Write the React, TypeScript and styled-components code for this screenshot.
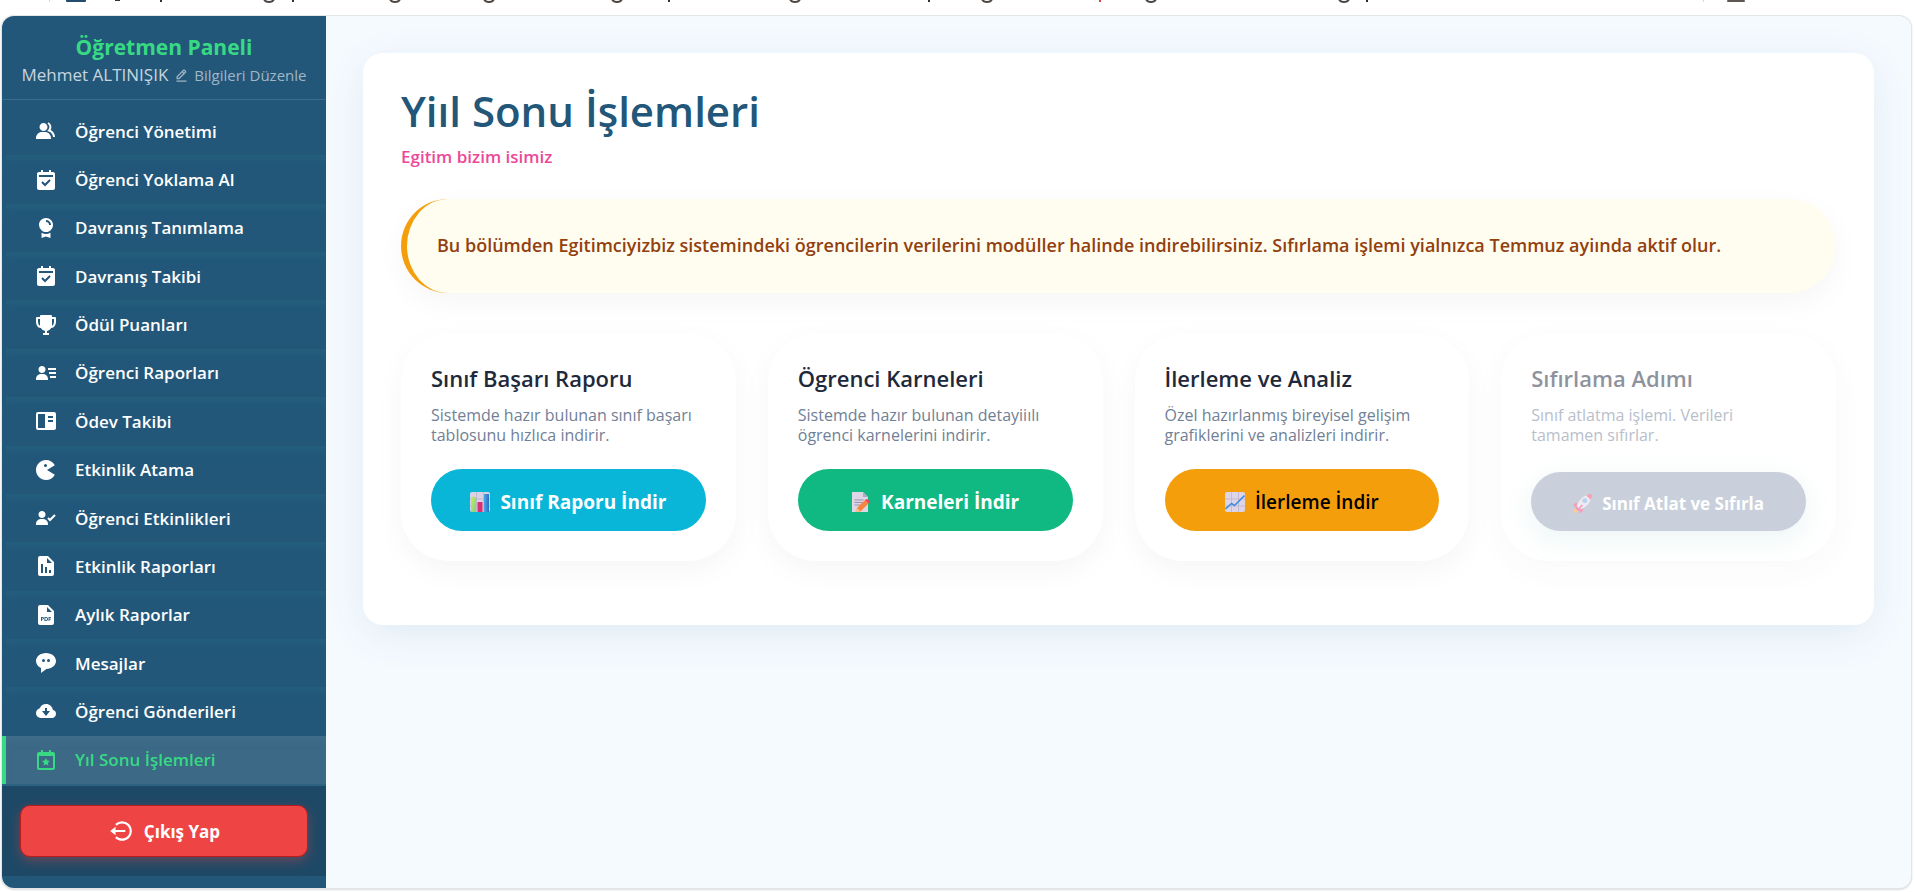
import React from "react";
import styled, { createGlobalStyle, css } from "styled-components";
import {
  BiCalendarStar,
  BiEditAlt,
  BiLogOutCircle,
  BiSolidAward,
  BiSolidBookContent,
  BiSolidCalendarCheck,
  BiSolidCloudDownload,
  BiSolidFilePdf,
  BiSolidGame,
  BiSolidGroup,
  BiSolidMessageRoundedDots,
  BiSolidReport,
  BiSolidTrophy,
  BiSolidUserCheck,
  BiSolidUserDetail,
} from "react-icons/bi";

const GlobalStyle = createGlobalStyle`
  *, *::before, *::after { box-sizing: border-box; }
  body {
    margin: 0;
    background: #ffffff;
    font-family: "Open Sans", sans-serif;
    color: #1e293b;
  }
  button, a { font-family: inherit; }
`;

const Page = styled.div`
  display: flex;
  flex-direction: column;
  min-height: 100vh;
  padding: 0 4px 4px 2px;
`;

const Bookmarks = styled.div`
  height: 16px;
  overflow: hidden;

  svg {
    display: block;
  }
`;

const Frame = styled.div`
  flex: 1;
  display: flex;
  border-radius: 12px;
  overflow: hidden;
  background: #f5faff;
  box-shadow: 0 0 0 1px #e3e6e8, 0 1px 2px 1px #d9dcde;
`;

const Sidebar = styled.aside`
  flex: 0 0 324px;
  display: flex;
  flex-direction: column;
  background: #22577a;
  color: #ffffff;
`;

const SidebarHeader = styled.header`
  height: 84px;
  padding: 15px 0 0;
  border-bottom: 1px solid #3b6a8c;
  text-align: center;
`;

const PanelTitle = styled.h2`
  margin: 0;
  font-size: 21px;
  line-height: 32px;
  font-weight: 700;
  color: #38d983;
`;

const UserLine = styled.div`
  display: flex;
  justify-content: center;
  align-items: center;
  gap: 6px;
  font-size: 17px;
  line-height: 24px;
  color: #c8d5de;
`;

const EditLink = styled.a`
  display: flex;
  align-items: center;
  gap: 5px;
  font-size: 15px;
  color: #a0b6c5;
  text-decoration: none;
`;

const Menu = styled.ul`
  flex: 1;
  display: flex;
  flex-direction: column;
  margin: 0;
  padding: 7px 0 0;
  list-style: none;
`;

const MenuLink = styled.a<{ $active?: boolean }>`
  flex: 1;
  display: flex;
  align-items: center;
  gap: 17px;
  min-height: 44px;
  padding-left: 28px;
  border-left: 4px solid transparent;
  font-size: 17px;
  font-weight: 600;
  color: #ffffff;
  text-decoration: none;

  svg {
    width: 24px;
    height: 24px;
  }

  ${({ $active }) =>
    $active &&
    css`
      border-left-color: #38d983;
      background: #3b6986;
      color: #38d983;
    `}
`;

const MenuItem = styled.li`
  flex: 1;
  display: flex;

  & + & ${MenuLink} {
    box-shadow: inset 0 10px 12px -8px #26647f;
  }

  & + &:last-child ${MenuLink} {
    box-shadow: inset 0 8px 12px -8px #457490;
  }
`;

const SidebarFooter = styled.footer`
  margin-bottom: 12px;
  padding: 19px 18px;
  border-top: 2px solid #2c6380;
  background: #1e4966;
`;

const LogoutButton = styled.button`
  display: flex;
  justify-content: center;
  align-items: center;
  gap: 10px;
  width: 100%;
  height: 52px;
  border: 1px solid #b91c1c;
  border-radius: 10px;
  background: #ef4444;
  box-shadow: 0 4px 12px rgba(239, 68, 68, 0.35);
  font-size: 17px;
  font-weight: 700;
  color: #ffffff;
`;

const Main = styled.main`
  flex: 1;
  min-width: 0;
  padding: 37px;
`;

const Panel = styled.section`
  padding: 34px 38px 64px;
  border-radius: 20px;
  background: #ffffff;
  box-shadow: 0 10px 40px rgba(34, 87, 122, 0.09);
`;

const PageTitle = styled.h1`
  margin: 0;
  font-size: 42px;
  line-height: 48px;
  font-weight: 600;
  color: #22577a;
`;

const Slogan = styled.p`
  margin: 10px 0 30px;
  font-size: 17px;
  line-height: 24px;
  font-weight: 600;
  color: #ec4899;
`;

const Notice = styled.div`
  display: flex;
  align-items: center;
  min-height: 94px;
  margin-bottom: 40px;
  padding: 16px 32px 18px 30px;
  border-left: 6px solid #f59e0b;
  border-radius: 48px;
  background: #fffdf0;
  box-shadow: 0 10px 30px rgba(0, 0, 0, 0.04);
  font-size: 18px;
  line-height: 28px;
  font-weight: 600;
  color: #92400e;
`;

const CardGrid = styled.div`
  display: grid;
  grid-template-columns: repeat(auto-fit, minmax(280px, 1fr));
  gap: 32px;
`;

const Card = styled.article<{ $disabled?: boolean }>`
  display: flex;
  flex-direction: column;
  min-height: 228px;
  padding: 30px;
  border-radius: 48px;
  background: #ffffff;
  box-shadow: 0 10px 30px rgba(0, 0, 0, 0.04);
  opacity: ${({ $disabled }) => ($disabled ? 0.5 : 1)};
`;

const CardTitle = styled.h3`
  margin: 0 0 12px;
  font-size: 22px;
  line-height: 30px;
  font-weight: 600;
`;

const CardText = styled.p`
  margin: 0 0 22px;
  font-size: 16px;
  line-height: 20px;
  color: #718096;
`;

type Tone = "cyan" | "green" | "amber" | "muted";

const tones = {
  cyan: css`
    background: #09b6d8;
    color: #ffffff;
  `,
  green: css`
    background: #10b981;
    color: #ffffff;
  `,
  amber: css`
    background: #f59e0b;
    color: #000000;
    font-weight: 600;
  `,
  muted: css`
    height: 59px;
    background: #94a3b8;
    color: #ffffff;
    font-size: 17px;
    box-shadow: 0 8px 25px rgba(56, 163, 165, 0.18);
  `,
};

const CardButton = styled.button<{ $tone: Tone }>`
  display: flex;
  justify-content: center;
  align-items: center;
  gap: 10px;
  width: 100%;
  height: 62px;
  margin-top: auto;
  padding: 3px 16px 0;
  border: 0;
  border-radius: 31px;
  font-size: 19px;
  font-weight: 700;
  ${({ $tone }) => tones[$tone]}
`;

const BarChartIcon = () => (
  <svg width="20" height="20" viewBox="0 0 20 20" aria-hidden="true">
    <defs>
      <linearGradient id="barGreen" x1="0" y1="0" x2="1" y2="1">
        <stop offset="0" stopColor="#c3ef5a" />
        <stop offset="1" stopColor="#7fcf86" />
      </linearGradient>
      <linearGradient id="barBlue" x1="0" y1="0" x2="1" y2="0">
        <stop offset="0" stopColor="#4aa8ea" />
        <stop offset="1" stopColor="#2a6fc4" />
      </linearGradient>
    </defs>
    <rect width="20" height="20" rx="2" fill="#d9d2e4" />
    <path d="M0 7h20M0 14h20M6.500 0v20M13.500 0v20" stroke="#b9aec9" strokeWidth="0.700" />
    <rect x="1" y="5" width="5" height="15" rx="0.500" fill="url(#barGreen)" />
    <rect x="7.500" y="10" width="5" height="10" rx="0.500" fill="#dc2f6f" />
    <rect x="14" y="2" width="5" height="18" rx="0.500" fill="url(#barBlue)" />
  </svg>
);

const MemoIcon = () => (
  <svg width="20" height="20" viewBox="0 0 20 20" aria-hidden="true">
    <path d="M1 0h11l5 5v15H1z" fill="#ddd6e6" />
    <path d="M12 0l5 5h-5z" fill="#b3a8c2" />
    <path d="M3.500 8h9M3.500 10.500h8M3.500 13h6" stroke="#9b90ad" strokeWidth="1" />
    <path d="M6 16L14 8l3.500 3.500-8 8L4.500 20z" fill="#f9843c" />
    <path d="M6 16l3.500 3.500L4.500 20z" fill="#f5c59c" />
    <path d="M14 8l1.200-.800q1-.400 2 .600l1.200 1.200q.700 1-.100 1.800L17.500 11.500z" fill="#f0405e" />
  </svg>
);

const LineChartIcon = () => (
  <svg width="20" height="20" viewBox="0 0 20 20" aria-hidden="true">
    <rect width="20" height="20" rx="2" fill="#dcd5e8" />
    <path d="M0 7h20M0 14h20M6.500 0v20M13.500 0v20" stroke="#bcb0cf" strokeWidth="0.700" />
    <path d="M0.500 17L6.500 11.500L9.500 13.500L19.500 3.500" fill="none" stroke="#3f8fdc" strokeWidth="1.600" />
  </svg>
);

const RocketIcon = () => (
  <svg width="19" height="19" viewBox="0 0 20 20" aria-hidden="true">
    <path d="M4 9q-3 .500-4 4l4-.500zM11 16q-.500 3-4 4l.500-4z" fill="#f2386f" />
    <path d="M2 14.500q-2 2.500-2 5.500 3.500-.200 5.500-2.200z" fill="#fb9a3c" />
    <path d="M4 13Q6 4 15 1l4 4q-3 9-12 11z" fill="#dcd6e8" />
    <path d="M14 1.500Q17 0 20 0q0 3-1.500 6z" fill="#f2466a" />
    <circle cx="12.500" cy="7" r="2.600" fill="#8b98c9" />
    <circle cx="12.500" cy="7" r="1.700" fill="#62b2ee" />
    <path d="M3 12l5 5-2.500 1L2 14.500z" fill="#e63a77" />
    <path d="M9 11l-4 5 1.500.500 4-4.500z" fill="#f2386f" />
  </svg>
);

const descenders = [269, 395, 489, 617, 795, 987, 1151, 1344];
const strokes = [160, 292, 668, 928];

const BookmarkStrip = () => (
  <svg width="1911" height="4" viewBox="2 0 1911 4" aria-hidden="true">
    <rect x="49" y="0" width="1" height="2" fill="#d8d8d8" />
    <path d="M66 0h20v1q0 1-1 1H67q-1 0-1-1z" fill="#234c6e" />
    <rect x="115" y="0" width="5" height="1" fill="#333333" />
    {descenders.map((x) => (
      <path key={x} d={`M${x - 5} -1q1 3 5 3t5-3`} fill="none" stroke="#4d4744" strokeWidth="2" />
    ))}
    {strokes.map((x) => (
      <rect key={x} x={x} y="0" width="2" height="2" fill="#333333" />
    ))}
    <rect x="1099" y="0" width="2" height="2" fill="#d24545" />
    <rect x="1366" y="0" width="2" height="2" fill="#33261a" />
    <rect x="1703" y="0" width="1" height="2" fill="#d8d8d8" />
    <rect x="1727" y="0" width="18" height="2" rx="1" fill="#5c5654" />
  </svg>
);

const menu = [
  { label: "Öğrenci Yönetimi", Icon: BiSolidGroup },
  { label: "Öğrenci Yoklama Al", Icon: BiSolidCalendarCheck },
  { label: "Davranış Tanımlama", Icon: BiSolidAward },
  { label: "Davranış Takibi", Icon: BiSolidCalendarCheck },
  { label: "Ödül Puanları", Icon: BiSolidTrophy },
  { label: "Öğrenci Raporları", Icon: BiSolidUserDetail },
  { label: "Ödev Takibi", Icon: BiSolidBookContent },
  { label: "Etkinlik Atama", Icon: BiSolidGame },
  { label: "Öğrenci Etkinlikleri", Icon: BiSolidUserCheck },
  { label: "Etkinlik Raporları", Icon: BiSolidReport },
  { label: "Aylık Raporlar", Icon: BiSolidFilePdf },
  { label: "Mesajlar", Icon: BiSolidMessageRoundedDots },
  { label: "Öğrenci Gönderileri", Icon: BiSolidCloudDownload },
  { label: "Yıl Sonu İşlemleri", Icon: BiCalendarStar, active: true },
];

const cards: {
  title: string;
  text: string;
  action: string;
  tone: Tone;
  Icon: React.ComponentType;
  disabled?: boolean;
}[] = [
  {
    title: "Sınıf Başarı Raporu",
    text: "Sistemde hazır bulunan sınıf başarı tablosunu hızlıca indirir.",
    action: "Sınıf Raporu İndir",
    tone: "cyan",
    Icon: BarChartIcon,
  },
  {
    title: "Ögrenci Karneleri",
    text: "Sistemde hazır bulunan detayiiılı ögrenci karnelerini indirir.",
    action: "Karneleri İndir",
    tone: "green",
    Icon: MemoIcon,
  },
  {
    title: "İlerleme ve Analiz",
    text: "Özel hazırlanmış bireyisel gelişim grafiklerini ve analizleri indirir.",
    action: "İlerleme İndir",
    tone: "amber",
    Icon: LineChartIcon,
  },
  {
    title: "Sıfırlama Adımı",
    text: "Sınıf atlatma işlemi. Verileri tamamen sıfırlar.",
    action: "Sınıf Atlat ve Sıfırla",
    tone: "muted",
    Icon: RocketIcon,
    disabled: true,
  },
];

export default function App() {
  return (
    <Page>
      <GlobalStyle />
      <Bookmarks>
        <BookmarkStrip />
      </Bookmarks>
      <Frame>
        <Sidebar>
          <SidebarHeader>
            <PanelTitle>Öğretmen Paneli</PanelTitle>
            <UserLine>
              <span>Mehmet ALTINIŞIK</span>
              <EditLink href="#profil">
                <BiEditAlt size={15} />
                Bilgileri Düzenle
              </EditLink>
            </UserLine>
          </SidebarHeader>
          <Menu>
            {menu.map(({ label, Icon, active }) => (
              <MenuItem key={label}>
                <MenuLink href="#" $active={active} aria-current={active ? "page" : undefined}>
                  <Icon />
                  {label}
                </MenuLink>
              </MenuItem>
            ))}
          </Menu>
          <SidebarFooter>
            <LogoutButton type="button">
              <BiLogOutCircle size={26} />
              Çıkış Yap
            </LogoutButton>
          </SidebarFooter>
        </Sidebar>
        <Main>
          <Panel>
            <PageTitle>Yiıl Sonu İşlemleri</PageTitle>
            <Slogan>Egitim bizim isimiz</Slogan>
            <Notice>
              Bu bölümden Egitimciyizbiz sistemindeki ögrencilerin verilerini modüller halinde
              indirebilirsiniz. Sıfırlama işlemi yialnızca Temmuz ayiında aktif olur.
            </Notice>
            <CardGrid>
              {cards.map(({ title, text, action, tone, Icon, disabled }) => (
                <Card key={title} $disabled={disabled}>
                  <CardTitle>{title}</CardTitle>
                  <CardText>{text}</CardText>
                  <CardButton type="button" $tone={tone} disabled={disabled}>
                    <Icon />
                    {action}
                  </CardButton>
                </Card>
              ))}
            </CardGrid>
          </Panel>
        </Main>
      </Frame>
    </Page>
  );
}
